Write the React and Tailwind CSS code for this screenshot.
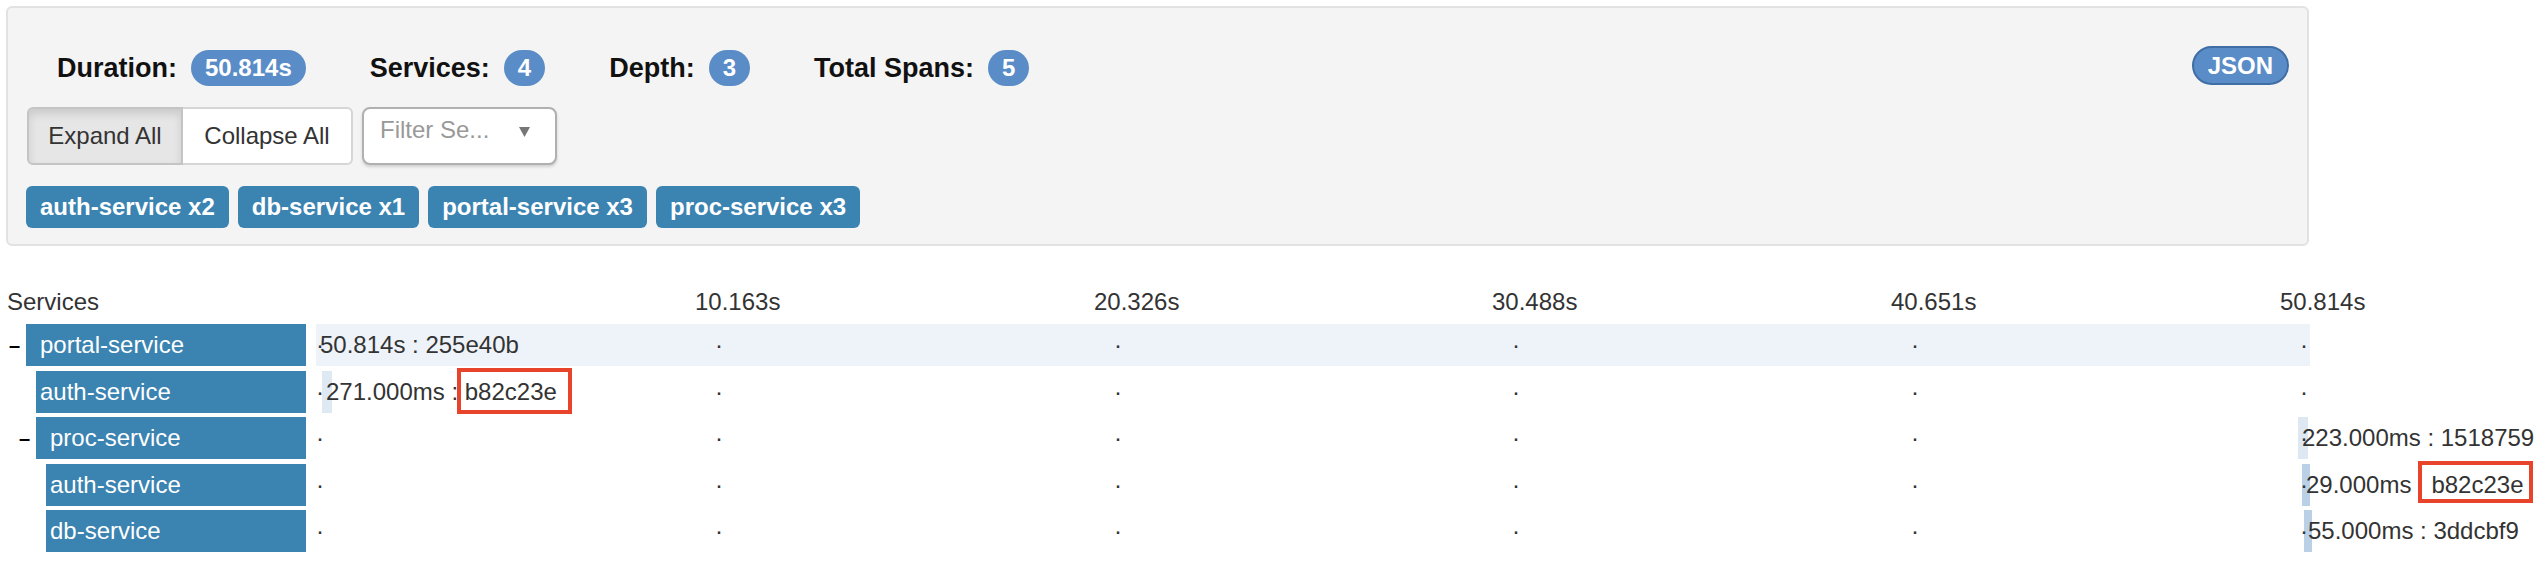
import React from 'react';

const ticks = [0, 399, 798, 1196, 1595, 1984];
const axis = ['10.163s', '20.326s', '30.488s', '40.651s', '50.814s'];

const stats = [
    { label: 'Duration:', value: '50.814s' },
    { label: 'Services:', value: '4' },
    { label: 'Depth:', value: '3' },
    { label: 'Total Spans:', value: '5' },
];

const tags = ['auth-service x2', 'db-service x1', 'portal-service x3', 'proc-service x3'];

// left/width are px on the timeline (50.814s = 1994px)
const rows = [
    { name: 'portal-service', level: 0, parent: true, left: 0, width: 1994, bar: 'bg-[#eef3fa]', text: '50.814s : 255e40b' },
    { name: 'auth-service', level: 1, left: 6, width: 10, bar: 'bg-[#dfe9f3]', text: '271.000ms : ', id: 'b82c23e', box: '-left-[8px] -right-[15px] -top-[3px] -bottom-[1px]' },
    { name: 'proc-service', level: 1, parent: true, left: 1982, width: 10, bar: 'bg-[#dde8f3]', text: '223.000ms : 1518759' },
    { name: 'auth-service', level: 2, left: 1986, width: 8, bar: 'bg-[#b9d0e6]', text: '29.000ms : ', id: 'b82c23e', box: '-left-[13px] -right-[9px] -top-[3px] bottom-[3px]' },
    { name: 'db-service', level: 2, left: 1988, width: 8, bar: 'bg-[#b9d0e6]', text: '55.000ms : 3ddcbf9' },
];

const App = () => {
    return (
        <div className="w-[2534px] h-[572px] overflow-hidden bg-white font-['Liberation_Sans',Arial,sans-serif] text-[#333]">
            {/* summary panel */}
            <div className="ml-[6px] mt-[6px] w-[2303px] h-[240px] rounded-[6px] border-2 border-[#e2e2e2] bg-[#f4f4f4] pl-[19px] pr-[18px] pt-[42px]">
                <div className="flex justify-between">
                    <div className="flex items-center h-[36px] pl-[30px]">
                        {stats.map((s, i) => (
                            <div key={s.label} className={`flex items-center ${i > 0 ? 'ml-[64px]' : ''}`}>
                                <span className="text-[27px] font-bold text-[#111]">{s.label}</span>
                                <span className="ml-[14px] h-[36px] px-[14px] rounded-full bg-[#5a8cc7] text-white text-[24px] font-bold leading-[36px]">{s.value}</span>
                            </div>
                        ))}
                    </div>
                    <button className="-mt-[4px] h-[39px] px-[14px] rounded-full border-2 border-[#3f6ea6] bg-[#5a8cc7] text-white text-[24px] font-bold leading-[35px]">JSON</button>
                </div>

                <div className="flex mt-[21px]">
                    <button className="w-[156px] h-[58px] rounded-l-[6px] border-2 border-[#c4c4c4] bg-[#e6e6e6] shadow-[inset_0_5px_8px_rgba(0,0,0,0.12)] text-[24px] text-[#333]">Expand All</button>
                    <button className="w-[170px] h-[58px] rounded-r-[6px] border-2 border-l-0 border-[#d6d6d6] bg-white text-[24px] text-[#333]">Collapse All</button>
                    <div className="ml-[9px] w-[195px] h-[58px] rounded-[8px] border-2 border-[#b0b0b0] bg-white shadow-[0_2px_3px_rgba(0,0,0,0.15)] flex items-start pl-[16px] pt-[7px]">
                        <span className="text-[24px] text-[#999] leading-[28px]">Filter Se...</span>
                        <svg className="ml-[30px] mt-[11px]" width="11" height="10" viewBox="0 0 11 10">
                            <path d="M0 0 L11 0 L5.5 10 Z" fill="#777" />
                        </svg>
                    </div>
                </div>

                <div className="flex gap-[9px] mt-[21px] -ml-[1px]">
                    {tags.map(t => (
                        <span key={t} className="h-[42px] px-[14px] rounded-[6px] bg-[#3b83b1] text-white text-[24px] font-bold leading-[42px]">{t}</span>
                    ))}
                </div>
            </div>

            {/* trace timeline */}
            <div className="mt-[42px]">
                <div className="flex h-[28px] text-[24px] leading-[28px]">
                    <div className="w-[316px] pl-[7px]">Services</div>
                    <div className="relative flex-1">
                        {axis.map((a, i) => (
                            <span key={a} className="absolute top-0 whitespace-nowrap" style={{ left: ticks[i + 1] - 20 }}>{a}</span>
                        ))}
                    </div>
                </div>

                <div className="flex flex-col gap-[4.5px] mt-[8px]">
                    {rows.map((r, idx) => (
                        <div key={idx} className="flex h-[42px]">
                            <div className="flex w-[306px]" style={{ paddingLeft: r.level * 10 }}>
                                <div className="w-[26px] shrink-0 pl-[9px] text-[20px] font-bold text-black leading-[42px]">{r.parent ? '–' : ''}</div>
                                <div className={`flex-1 bg-[#3b83b1] text-white text-[24px] leading-[42px] whitespace-nowrap ${r.parent ? 'pl-[14px]' : 'pl-[4px]'}`}>{r.name}</div>
                            </div>
                            <div className="relative flex-1 ml-[10px] text-[24px] leading-[42px]">
                                <div className={`absolute top-0 bottom-0 ${r.bar}`} style={{ left: r.left, width: r.width }} />
                                {ticks.map(t => (
                                    <span key={t} className="absolute top-0" style={{ left: t }}>·</span>
                                ))}
                                <span className="absolute top-0 whitespace-nowrap" style={{ left: r.left + 4 }}>
                                    {r.text}
                                    {r.id && (
                                        <span className="relative inline-block">
                                            <span className={`absolute border-4 border-[#e8432b] bg-white ${r.box}`} />
                                            <span className="relative">{r.id}</span>
                                        </span>
                                    )}
                                </span>
                            </div>
                        </div>
                    ))}
                </div>
            </div>
        </div>
    );
};

export default App;
